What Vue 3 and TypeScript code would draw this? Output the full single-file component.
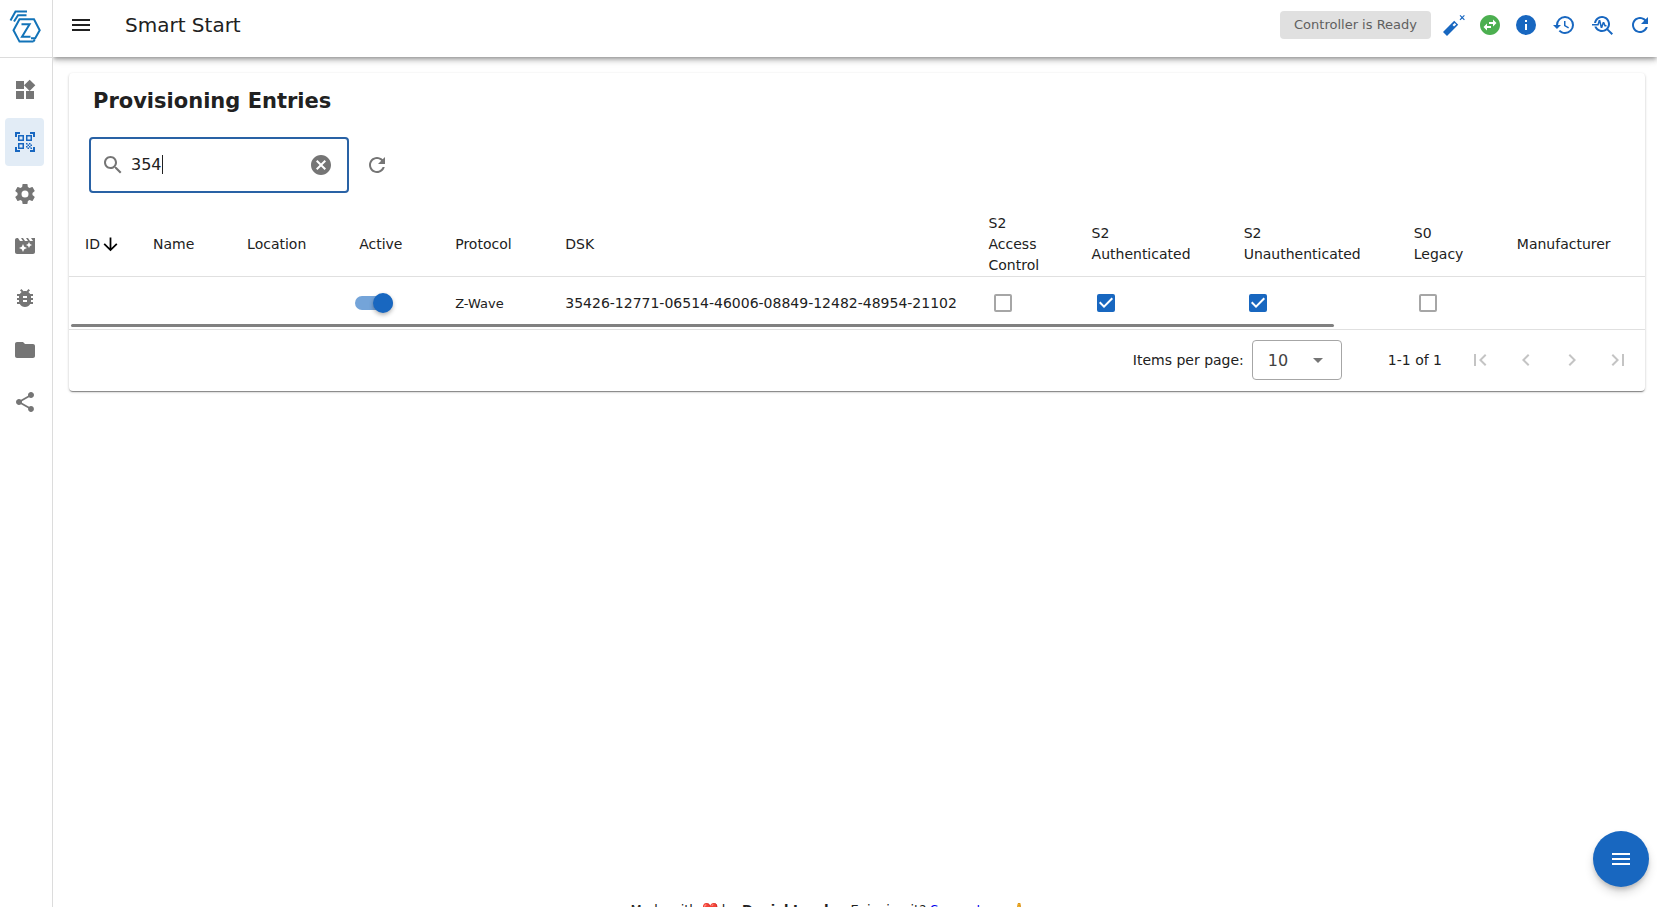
<script setup lang="ts">
import { ref } from 'vue'

interface NavItem {
  label: string
  path: string
  active?: boolean
}

interface Column {
  key: string
  label: string
  width: number
}

const refreshPath =
  'M17.65 6.35C16.2 4.9 14.21 4 12 4c-4.42 0-7.99 3.58-7.99 8s3.57 8 7.99 8c3.73 0 6.84-2.55 7.73-6h-2.08c-.82 2.33-3.04 4-5.65 4-3.31 0-6-2.69-6-6s2.69-6 6-6c1.66 0 3.14.69 4.22 1.78L13 11h7V4l-2.35 2.35z'
const menuPath = 'M3 6h18v2H3V6m0 5h18v2H3v-2m0 5h18v2H3v-2z'

const navItems: NavItem[] = [
  {
    label: 'Control Panel',
    path: 'M13 13v8h8v-8h-8zM3 21h8v-8H3v8zM3 3v8h8V3H3zm13.66-1.31L11 7.34 16.66 13l5.66-5.66-5.66-5.65z',
  },
  {
    label: 'Smart Start',
    active: true,
    path: 'M9.5 6.5v3h-3v-3h3M11 5H5v6h6V5zM9.5 14.5v3h-3v-3h3M11 13H5v6h6v-6zM17.5 6.5v3h-3v-3h3M19 5h-6v6h6V5zM13 13h1.5v1.5H13V13zM14.5 14.5H16V16h-1.5v-1.5zM16 13h1.5v1.5H16V13zM13 16h1.5v1.5H13V16zM14.5 17.5H16V19h-1.5v-1.5zM16 16h1.5v1.5H16V16zM17.5 14.5H19V16h-1.5v-1.5zM17.5 17.5H19V19h-1.5v-1.5zM22 7h-2V4h-3V2h5v5zM22 22v-5h-2v3h-3v2h5zM2 22h5v-2H4v-3H2v5zM2 2v5h2V4h3V2H2z',
  },
  {
    label: 'Settings',
    path: 'M12,15.5A3.5,3.5 0 0,1 8.5,12A3.5,3.5 0 0,1 12,8.5A3.5,3.5 0 0,1 15.5,12A3.5,3.5 0 0,1 12,15.5M19.43,12.97C19.47,12.65 19.5,12.33 19.5,12C19.5,11.67 19.47,11.34 19.43,11L21.54,9.37C21.73,9.22 21.78,8.95 21.66,8.73L19.66,5.27C19.54,5.05 19.27,4.96 19.05,5.05L16.56,6.05C16.04,5.66 15.5,5.32 14.87,5.07L14.5,2.42C14.46,2.18 14.25,2 14,2H10C9.75,2 9.54,2.18 9.5,2.42L9.13,5.07C8.5,5.32 7.96,5.66 7.44,6.05L4.95,5.05C4.73,4.96 4.46,5.05 4.34,5.27L2.34,8.73C2.21,8.95 2.27,9.22 2.46,9.37L4.57,11C4.53,11.34 4.5,11.67 4.5,12C4.5,12.33 4.53,12.65 4.57,12.97L2.46,14.63C2.27,14.78 2.21,15.05 2.34,15.27L4.34,18.73C4.46,18.95 4.73,19.03 4.95,18.95L7.44,17.94C7.96,18.34 8.5,18.68 9.13,18.93L9.5,21.58C9.54,21.82 9.75,22 10,22H14C14.25,22 14.46,21.82 14.5,21.58L14.87,18.93C15.5,18.67 16.04,18.34 16.56,17.94L19.05,18.95C19.27,19.03 19.54,18.95 19.66,18.73L21.66,15.27C21.78,15.05 21.73,14.78 21.54,14.63L19.43,12.97Z',
  },
  {
    label: 'Scenes',
    path: 'M18 4l2 3h-3l-2-3h-2l2 3h-3l-2-3H8l2 3H7L5 4H4c-1.1 0-1.99.9-1.99 2L2 18c0 1.1.9 2 2 2h16c1.1 0 2-.9 2-2V4h-4zm-6.75 11.25L10 18l-1.25-2.75L6 14l2.75-1.25L10 10l1.25 2.75L14 14l-2.75 1.25zm5.69-3.31L16 14l-.94-2.06L13 11l2.06-.94L16 8l.94 2.06L19 11l-2.06.94z',
  },
  {
    label: 'Debug',
    path: 'M20 8h-2.81c-.45-.78-1.07-1.45-1.82-1.96L17 4.41 15.59 3l-2.17 2.17C12.96 5.06 12.49 5 12 5s-.96.06-1.41.17L8.41 3 7 4.41l1.62 1.63C7.88 6.55 7.26 7.22 6.81 8H4v2h2.09c-.05.33-.09.66-.09 1v1H4v2h2v1c0 .34.04.67.09 1H4v2h2.81c1.04 1.79 2.97 3 5.19 3s4.15-1.21 5.19-3H20v-2h-2.09c.05-.33.09-.66.09-1v-1h2v-2h-2v-1c0-.34-.04-.67-.09-1H20V8zm-6 8h-4v-2h4v2zm0-4h-4v-2h4v2z',
  },
  {
    label: 'Store',
    path: 'M10 4H4c-1.1 0-1.99.9-1.99 2L2 18c0 1.1.9 2 2 2h16c1.1 0 2-.9 2-2V8c0-1.1-.9-2-2-2h-8l-2-2z',
  },
  {
    label: 'Network graph',
    path: 'M18 16.08c-.76 0-1.44.3-1.96.77L8.91 12.7c.05-.23.09-.46.09-.7s-.04-.47-.09-.7l7.05-4.11c.54.5 1.25.81 2.04.81 1.66 0 3-1.34 3-3s-1.34-3-3-3-3 1.34-3 3c0 .24.04.47.09.7L8.04 9.81C7.5 9.31 6.79 9 6 9c-1.66 0-3 1.34-3 3s1.34 3 3 3c.79 0 1.5-.31 2.04-.81l7.12 4.16c-.05.21-.08.43-.08.65 0 1.61 1.31 2.92 2.92 2.92 1.61 0 2.92-1.31 2.92-2.92s-1.31-2.92-2.92-2.92z',
  },
]

const actions = [
  {
    label: 'Setup wizard',
    kind: '',
    path: 'M1 19 12.2 7.8 16.2 11.8 5 23zM12.7 9.9 10.5 12.1 12 13.6 14.2 11.4zM17.6 2.8l.8-.8 1.8 1.8L22 2l.8.8L21 4.600l1.8 1.800-.8.8-1.8-1.800-1.800 1.800-.8-.8 1.800-1.800z',
  },
  {
    label: 'Connection status',
    kind: 'ok',
    path: 'M22 12c0-5.52-4.48-10-10-10S2 6.48 2 12s4.48 10 10 10 10-4.48 10-10zm-7-5.5l3.5 3.5-3.5 3.5V11h-4V9h4V6.5zm-6 11L5.5 14 9 10.5V13h4v2H9v2.5z',
  },
  {
    label: 'Information',
    kind: '',
    path: 'M13 9h-2V7h2m0 10h-2v-6h2m-1-9A10 10 0 0 0 2 12a10 10 0 0 0 10 10 10 10 0 0 0 10-10A10 10 0 0 0 12 2z',
  },
  {
    label: 'History',
    kind: 'wide',
    path: 'M13.5,8H12V13L16.28,15.54L17,14.33L13.5,12.25V8M13,3A9,9 0 0,0 4,12H1L4.96,16.03L9,12H6A7,7 0 0,1 13,5A7,7 0 0,1 20,12A7,7 0 0,1 13,19C11.07,19 9.32,18.21 8.06,16.94L6.64,18.36C8.27,20 10.5,21 13,21A9,9 0 0,0 22,12A9,9 0 0,0 13,3Z',
  },
  {
    label: 'Diagnostics',
    kind: 'wide',
    path: 'M22 20.59l-4.69-4.69C18.37 14.55 19 12.85 19 11c0-4.42-3.58-8-8-8-4.08 0-7.44 3.05-7.93 7h2.02C5.57 7.17 8.03 5 11 5c3.31 0 6 2.69 6 6s-2.69 6-6 6c-2.42 0-4.5-1.44-5.45-3.5H3.4C4.45 16.69 7.46 19 11 19c1.85 0 3.55-.63 4.9-1.69L20.59 22 22 20.59zM8.43 9.69 9.65 15h1.64l1.26-3.78.95 2.28h2V12h-1l-1.25-3h-1.54l-1.12 3.37L9.35 7H7.7l-1.25 4H1v1.5h6.55l.88-2.81z',
  },
  { label: 'Reload', kind: '', path: refreshPath },
]

const columns: Column[] = [
  { key: 'id', label: 'ID', width: 68 },
  { key: 'name', label: 'Name', width: 94 },
  { key: 'location', label: 'Location', width: 112 },
  { key: 'active', label: 'Active', width: 96 },
  { key: 'protocol', label: 'Protocol', width: 110 },
  { key: 'dsk', label: 'DSK', width: 423 },
  { key: 's2Access', label: 'S2 Access Control', width: 103 },
  { key: 's2Auth', label: 'S2 Authenticated', width: 152 },
  { key: 's2Unauth', label: 'S2 Unauthenticated', width: 170 },
  { key: 's0', label: 'S0 Legacy', width: 103 },
  { key: 'manufacturer', label: 'Manufacturer', width: 144 },
]
const classKeys = ['s2Access', 's2Auth', 's2Unauth', 's0']

const entries = ref([
  {
    active: true,
    protocol: 'Z-Wave',
    dsk: '35426-12771-06514-46006-08849-12482-48954-21102',
    classes: { s2Access: false, s2Auth: true, s2Unauth: true, s0: false } as Record<string, boolean>,
  },
])

const pageButtons = [
  { label: 'First page', path: 'M18.41 16.59L13.82 12l4.59-4.59L17 6l-6 6 6 6zM6 6h2v12H6z' },
  { label: 'Previous page', path: 'M15.41 7.41L14 6l-6 6 6 6 1.41-1.41L10.83 12z' },
  { label: 'Next page', path: 'M10 6L8.59 7.41 13.17 12l-4.58 4.59L10 18l6-6z' },
  { label: 'Last page', path: 'M5.59 7.41L10.18 12l-4.59 4.59L7 18l6-6-6-6zM16 6h2v12h-2z' },
]

const search = ref('354')
const perPage = ref('10')
</script>

<template>
  <div class="app">
    <aside class="rail">
      <a class="logo" href="#" aria-label="Home">
        <svg viewBox="0 0 36 36" aria-hidden="true">
          <path d="M3.500 13.500 8.500 4.500H20M7 14.500 11 8.300H19.500" />
          <path
            d="M26.500 34.600 27.700 32.600M26.500 34.600H12.500L6.500 23.200 12.500 12.300H27L32.700 23.200 28.200 31.200H24"
          />
          <path d="M14.500 17.200H22.600L15 29.800H23.500" />
        </svg>
      </a>
      <nav class="nav" aria-label="Main">
        <a
          v-for="item in navItems"
          :key="item.label"
          href="#"
          class="nav-item"
          :class="{ active: item.active }"
          :aria-label="item.label"
        >
          <svg class="icon" viewBox="0 0 24 24" aria-hidden="true"><path :d="item.path" /></svg>
        </a>
      </nav>
    </aside>

    <div class="page">
      <header class="bar">
        <button type="button" class="icon-btn" aria-label="Toggle menu">
          <svg class="icon" viewBox="0 0 24 24" aria-hidden="true"><path :d="menuPath" /></svg>
        </button>
        <h1 class="bar-title">Smart Start</h1>
        <span class="status">Controller is Ready</span>
        <div class="actions">
          <button
            v-for="action in actions"
            :key="action.label"
            type="button"
            class="icon-btn"
            :class="action.kind"
            :aria-label="action.label"
          >
            <svg class="icon" viewBox="0 0 24 24" aria-hidden="true">
              <path fill-rule="evenodd" :d="action.path" />
            </svg>
          </button>
        </div>
      </header>

      <main class="main">
        <div class="content">
          <section class="card">
            <h2 class="card-title">Provisioning Entries</h2>
            <div class="tools">
              <div class="search">
                <svg class="icon" viewBox="0 0 24 24" aria-hidden="true">
                  <path
                    d="M15.5 14h-.79l-.28-.27C15.41 12.59 16 11.11 16 9.5 16 5.91 13.09 3 9.5 3S3 5.910 3 9.500 5.910 16 9.500 16c1.610 0 3.090-.59 4.230-1.570l.27.28v.79l5 4.990L20.490 19l-4.990-5zm-6 0C7.010 14 5 11.990 5 9.500S7.010 5 9.500 5 14 7.010 14 9.500 11.990 14 9.500 14z"
                  />
                </svg>
                <label class="field">
                  <input v-model="search" type="text" aria-label="Search" /><span class="caret"></span>
                </label>
                <button type="button" class="icon-btn" aria-label="Clear search" @click="search = ''">
                  <svg class="icon" viewBox="0 0 24 24" aria-hidden="true">
                    <path
                      d="M12 2C6.47 2 2 6.47 2 12s4.470 10 10 10 10-4.470 10-10S17.530 2 12 2zm5 13.590L15.590 17 12 13.410 8.410 17 7 15.590 10.590 12 7 8.410 8.410 7 12 10.590 15.590 7 17 8.410 13.410 12 17 15.590z"
                    />
                  </svg>
                </button>
              </div>
              <button type="button" class="icon-btn muted" aria-label="Refresh entries">
                <svg class="icon" viewBox="0 0 24 24" aria-hidden="true"><path :d="refreshPath" /></svg>
              </button>
            </div>

            <div class="table-wrap">
              <table>
                <colgroup>
                  <col v-for="c in columns" :key="c.key" :style="{ width: c.width + 'px' }" />
                </colgroup>
                <thead>
                  <tr>
                    <th v-for="c in columns" :key="c.key" scope="col" :class="{ narrow: c.key === 's2Access' }">
                      <span class="head">
                        {{ c.label }}
                        <svg v-if="c.key === 'id'" class="sort" viewBox="0 0 24 24" aria-hidden="true">
                          <path d="M11 4h2v12l5.500-5.500 1.420 1.420L12 19.840l-7.920-7.920L5.500 10.500 11 16V4z" />
                        </svg>
                      </span>
                    </th>
                  </tr>
                </thead>
                <tbody>
                  <tr v-for="entry in entries" :key="entry.dsk">
                    <td></td>
                    <td></td>
                    <td></td>
                    <td class="switch-cell">
                      <input v-model="entry.active" type="checkbox" class="switch" role="switch" aria-label="Active" />
                    </td>
                    <td class="small">{{ entry.protocol }}</td>
                    <td class="dsk">{{ entry.dsk }}</td>
                    <td v-for="key in classKeys" :key="key" class="check-cell">
                      <span class="check">
                        <input v-model="entry.classes[key]" type="checkbox" :aria-label="key" />
                        <svg viewBox="3 3 18 18" aria-hidden="true">
                          <path d="M10 17l-5-5 1.410-1.410L10 14.170l7.590-7.590L19 8l-9 9z" />
                        </svg>
                      </span>
                    </td>
                    <td></td>
                  </tr>
                </tbody>
              </table>
              <div class="thumb"></div>
            </div>

            <div class="pager">
              <label for="per-page">Items per page:</label>
              <div class="select">
                <select id="per-page" v-model="perPage">
                  <option>10</option>
                  <option>25</option>
                  <option>50</option>
                </select>
                <svg class="icon" viewBox="0 0 24 24" aria-hidden="true"><path d="M7 10l5 5 5-5z" /></svg>
              </div>
              <span class="range">1-1 of 1</span>
              <div class="page-buttons">
                <button v-for="b in pageButtons" :key="b.label" type="button" disabled :aria-label="b.label">
                  <svg class="icon" viewBox="0 0 24 24" aria-hidden="true"><path :d="b.path" /></svg>
                </button>
              </div>
            </div>
          </section>
        </div>
        <footer class="credits">
          <span>Made with ❤️ by <strong>Daniel Lando</strong> - Enjoying it? <a href="#">Support me 🙏</a></span>
        </footer>
      </main>
    </div>

    <button type="button" class="fab" aria-label="Open actions">
      <svg class="icon" viewBox="0 0 24 24" aria-hidden="true"><path :d="menuPath" /></svg>
    </button>
  </div>
</template>

<style>
body {
  margin: 0;
  background: #fff;
}
</style>

<style scoped>
.app,
.app * {
  box-sizing: border-box;
}
.app {
  display: flex;
  height: 100vh;
  font-family: 'DejaVu Sans', sans-serif;
  font-size: 14px;
  line-height: 21px;
  color: #212121;
}
button,
input,
select {
  font: inherit;
  color: inherit;
}
button {
  padding: 0;
  border: 0;
  background: none;
  cursor: pointer;
}
.icon {
  display: block;
  flex: none;
  width: 24px;
  height: 24px;
  fill: currentColor;
}
.icon-btn {
  display: flex;
  justify-content: center;
  width: 24px;
}

.rail {
  flex: none;
  width: 53px;
  border-right: 1px solid #dcdcdc;
}
.logo {
  display: flex;
  align-items: center;
  height: 58px;
  padding: 0 0 8px 7px;
  border-bottom: 1px solid #dcdcdc;
}
.logo svg {
  width: 36px;
  height: 36px;
  fill: none;
  stroke: #1273b8;
  stroke-width: 2;
}
.nav {
  display: flex;
  flex-direction: column;
  gap: 4px;
  padding: 8px 8px 8px 5px;
}
.nav-item {
  display: flex;
  align-items: center;
  justify-content: center;
  height: 48px;
  border-radius: 4px;
  color: #757575;
}
.nav-item.active {
  color: #1867c0;
  background: #e2ecf6;
}

.page {
  display: flex;
  flex-direction: column;
  flex: 1;
  min-width: 0;
  overflow: hidden;
}
.bar {
  z-index: 1;
  display: flex;
  align-items: center;
  flex: none;
  height: 57px;
  padding: 0 5px 7px 16px;
  background: #fff;
  box-shadow: 0 2px 4px -1px rgba(0, 0, 0, 0.3), 0 4px 5px rgba(0, 0, 0, 0.14), 0 1px 10px rgba(0, 0, 0, 0.12);
}
.bar-title {
  flex: 1;
  margin: 0 0 0 32px;
  font-size: 20px;
  font-weight: 400;
  line-height: 28px;
}
.status {
  height: 28px;
  padding: 0 14px;
  margin-right: 11px;
  border-radius: 4px;
  background: #e0e0e0;
  color: #5f5f5f;
  font-size: 13px;
  line-height: 27px;
  white-space: nowrap;
}
.actions {
  display: flex;
  gap: 12px;
  color: #1867c0;
}
.actions .ok {
  color: #4caf50;
}
.actions .wide {
  width: 27px;
}

.main {
  flex: 1;
  min-height: 0;
  overflow-y: auto;
  scrollbar-width: none;
}
.content {
  min-height: 100%;
  padding: 16px 12px 0 16px;
}
.card {
  border-radius: 4px;
  background: #fff;
  box-shadow: 0 2px 1px -1px rgba(0, 0, 0, 0.3), 0 1px 1px rgba(0, 0, 0, 0.14), 0 1px 3px rgba(0, 0, 0, 0.2);
}
.card-title {
  margin: 0;
  padding: 12px 24px;
  font-size: 21px;
  font-weight: 700;
  line-height: 32px;
}
.tools {
  display: flex;
  align-items: center;
  gap: 16px;
  padding: 8px 20px 18px;
}
.search {
  display: flex;
  align-items: center;
  width: 260px;
  height: 56px;
  padding: 0 14px 0 10px;
  border: 2px solid #2962a5;
  border-radius: 4px;
  color: #757575;
}
.field {
  display: flex;
  align-items: center;
  flex: 1;
  min-width: 0;
  padding: 0 8px 2px 6px;
  color: #212121;
  font-size: 16px;
}
.field input {
  field-sizing: content;
  max-width: 100%;
  padding: 0;
  border: 0;
  outline: 0;
  background: none;
}
.caret {
  width: 1px;
  height: 19px;
  background: #212121;
}
.muted {
  color: #757575;
}

.table-wrap {
  position: relative;
  overflow: hidden;
  border-bottom: 1px solid #e0e0e0;
}
table {
  width: 100%;
  table-layout: fixed;
  border-collapse: separate;
  border-spacing: 0;
}
th {
  height: 66px;
  padding: 1px 16px 0;
  border-bottom: 1px solid #e0e0e0;
  font-weight: 400;
  text-align: left;
}
th.narrow {
  padding-right: 32px;
}
.head {
  display: flex;
  align-items: center;
}
.sort {
  flex: none;
  width: 21px;
  height: 21px;
}
td {
  height: 52px;
  padding: 0 16px;
}
.small {
  font-size: 13px;
}
.dsk {
  white-space: nowrap;
}
.switch-cell {
  padding-left: 12px;
}
.switch {
  position: relative;
  display: block;
  appearance: none;
  width: 38px;
  height: 14px;
  margin: 0;
  border-radius: 7px;
  background: #9e9e9e;
}
.switch:checked {
  background: #74a4d9;
}
.switch::before {
  content: '';
  position: absolute;
  top: -3px;
  left: 0;
  width: 20px;
  height: 20px;
  border-radius: 50%;
  background: #fff;
  box-shadow: 0 2px 4px rgba(0, 0, 0, 0.3);
}
.switch:checked::before {
  left: 18px;
  background: #1867c0;
}
.check-cell {
  padding-left: 21px;
}
.check {
  position: relative;
  display: block;
  width: 18px;
  height: 18px;
}
.check input {
  display: block;
  appearance: none;
  width: 18px;
  height: 18px;
  margin: 0;
  border: 2px solid #a6a6a6;
  border-radius: 2px;
}
.check input:checked {
  border-color: #1867c0;
  background: #1867c0;
}
.check svg {
  position: absolute;
  inset: 0;
  display: none;
  fill: #fff;
  pointer-events: none;
}
.check input:checked + svg {
  display: block;
}
.thumb {
  position: absolute;
  left: 2px;
  bottom: 2px;
  width: calc(80% + 2px);
  height: 3px;
  border-radius: 2px;
  background: #808080;
}

.pager {
  display: flex;
  align-items: center;
  justify-content: flex-end;
  height: 61px;
  padding: 0 7px 1px 0;
}
.select {
  position: relative;
  width: 90px;
  height: 40px;
  margin: 0 46px 0 8px;
}
.select select {
  appearance: none;
  width: 100%;
  height: 100%;
  padding: 0 40px 0 15px;
  border: 1px solid #a6a6a6;
  border-radius: 4px;
  background: #fff;
  color: #424242;
  font-size: 16px;
}
.select .icon {
  position: absolute;
  top: 8px;
  right: 12px;
  color: #757575;
  pointer-events: none;
}
.page-buttons {
  display: flex;
  gap: 6px;
  margin-left: 18px;
}
.page-buttons button {
  display: flex;
  align-items: center;
  justify-content: center;
  width: 40px;
  height: 40px;
  color: #c4c4c4;
  cursor: default;
}

.credits {
  display: flex;
  justify-content: center;
  height: 48px;
  margin-top: -7px;
  padding-right: 53px;
  font-size: 13px;
  line-height: 20px;
}
.credits a {
  color: #0000ee;
  text-decoration: none;
}
.fab {
  position: fixed;
  right: 8px;
  bottom: 20px;
  display: flex;
  align-items: center;
  justify-content: center;
  width: 56px;
  height: 56px;
  border-radius: 50%;
  background: #1867c0;
  color: #fff;
  box-shadow: 0 3px 5px -1px rgba(0, 0, 0, 0.2), 0 6px 10px rgba(0, 0, 0, 0.14);
}
</style>
